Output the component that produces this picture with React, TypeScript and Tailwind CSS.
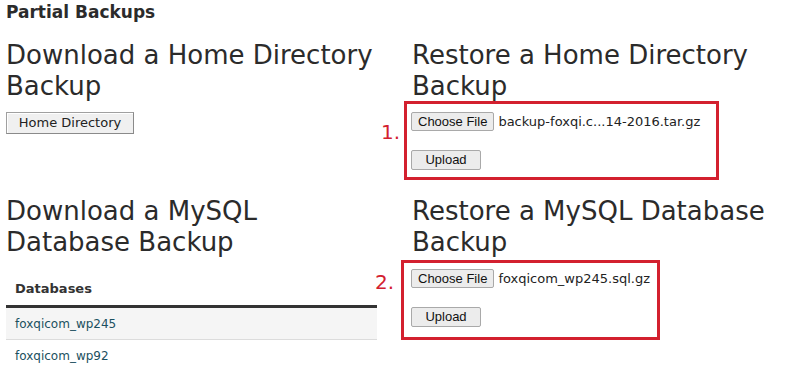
import React from 'react';

const sans = { fontFamily: '"DejaVu Sans", Verdana, sans-serif' };

const Heading: React.FC<{ children: React.ReactNode }> = ({ children }) => (
  <h2 className="text-[26px] leading-[31px] font-normal text-[#2b2b2b] font-['DejaVu_Sans',Verdana,sans-serif]">{children}</h2>
);

const FileBox: React.FC<{ num: string; file: string; className: string; numClass: string }> = ({ num, file, className, numClass }) => (
  <div className={`relative border-[3px] border-[#d3202f] ${className}`}>
    <span className={`absolute text-[20px] leading-[20px] text-[#d3202f] font-['DejaVu_Sans',Verdana,sans-serif] ${numClass}`}>{num}</span>
    <div className="flex items-center">
      <button className="h-[19px] px-[6px] text-[13px] leading-[17px] text-[#111] bg-[#ececec] border border-[#a9a9a9] rounded-[2px] font-['Liberation_Sans',Arial,sans-serif]">
        Choose File
      </button>
      <span className="ml-[4px] text-[13px] leading-[19px] text-[#222] font-['DejaVu_Sans',Verdana,sans-serif]">{file}</span>
    </div>
    <button className="mt-[19px] w-[70px] h-[20px] text-[13px] leading-[18px] text-[#111] bg-[#ececec] border border-[#a9a9a9] rounded-[2px] font-['Liberation_Sans',Arial,sans-serif]">
      Upload
    </button>
  </div>
);

export default function App() {
  return (
    <div className="w-[800px] h-[367px] overflow-hidden bg-white pl-[6px] text-[#222]" style={sans}>
      <h1 className="text-[17px] leading-[24px] font-bold text-[#2b2b2b]">Partial Backups</h1>

      <div className="grid grid-cols-[372px_1fr] gap-x-[34px] mt-[16px]">
        <div>
          <Heading>Download a Home Directory Backup</Heading>
          <button className="mt-[10px] w-[128px] h-[22px] text-[13px] leading-[20px] text-[#222] bg-[#f0f0f0] border border-[#a0a0a0] border-r-[#8a8a8a] border-b-[#8a8a8a] shadow-[inset_1px_1px_0_#fff]">
            Home Directory
          </button>
        </div>
        <div>
          <Heading>Restore a Home Directory Backup</Heading>
          <FileBox
            num="1."
            file="backup-foxqi.c...14-2016.tar.gz"
            className="-mt-[1px] -ml-[8px] w-[315px] h-[79px] pt-[8px] pl-[4px]"
            numClass="-left-[26px] top-[18px]"
          />
        </div>
      </div>

      <div className="grid grid-cols-[372px_1fr] gap-x-[34px] mt-[16px]">
        <div>
          <Heading>Download a MySQL Database Backup</Heading>
          <div className="w-[371px] mt-[18px]">
            <div className="h-[32px] pl-[9px] pb-[4px] flex items-center border-b-[3px] border-[#333] text-[13px] font-bold text-[#333]">
              Databases
            </div>
            <div className="h-[32px] pl-[9px] flex items-center bg-[#f5f5f5] border-b border-[#dcdcdc]">
              <a className="text-[12px] leading-[16px] text-[#1b5060] font-['DejaVu_Sans',Verdana,sans-serif]">foxqicom_wp245</a>
            </div>
            <div className="h-[31px] pl-[9px] flex items-center">
              <a className="text-[12px] leading-[16px] text-[#1b5060] font-['DejaVu_Sans',Verdana,sans-serif]">foxqicom_wp92</a>
            </div>
          </div>
        </div>
        <div>
          <Heading>Restore a MySQL Database Backup</Heading>
          <FileBox
            num="2."
            file="foxqicom_wp245.sql.gz"
            className="mt-[2px] -ml-[11px] w-[259px] h-[80px] pt-[6px] pl-[7px]"
            numClass="-left-[29px] top-[9px]"
          />
        </div>
      </div>
    </div>
  );
}
